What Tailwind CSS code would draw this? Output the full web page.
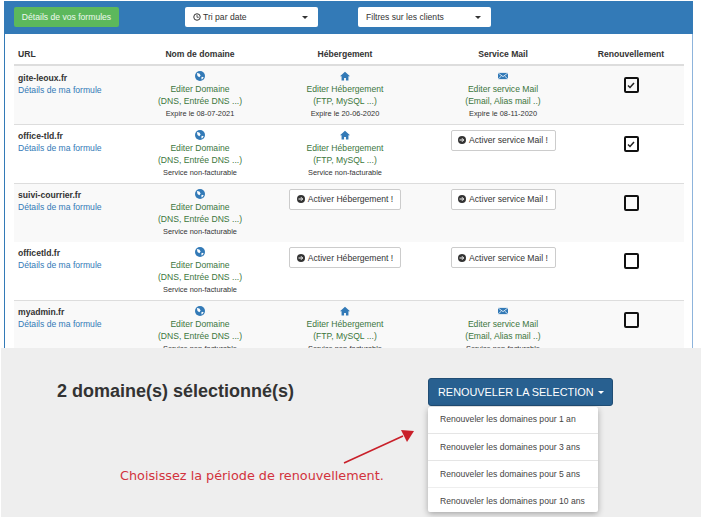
<!DOCTYPE html>
<html lang="fr">
<head>
    <meta charset="UTF-8">
    <title>Renouvellement</title>
    <script src="https://cdn.jsdelivr.net/npm/@tailwindcss/browser@4"></script>
</head>
<body class="bg-white w-[703px] h-[517px] overflow-hidden font-['Liberation_Sans',Arial,sans-serif] text-[#333]">
    <!-- Panel -->
    <div class="h-[348px] overflow-hidden pt-px pl-1 pr-[10px]">
        <div class="border-x border-[#8db4dc] border-l-[#337ab7] h-[400px]">
            <!-- Panel header -->
            <div class="bg-[#337ab7] h-[33px] pt-1.5 -mx-px flex text-[8.6px]">
                <button class="ml-2.5 w-[105px] h-5 bg-[#5cb85c] rounded-[2px] text-white/90">Détails de vos formules</button>
                <button class="ml-[66px] w-[133px] h-5 bg-white rounded-[2px] pl-2 pr-2.5 flex items-center text-[#333]">
                    <svg class="w-2 h-2 mr-px" viewBox="0 0 16 16"><circle cx="8" cy="8" r="6.5" fill="none" stroke="#333" stroke-width="2"/><path d="M8 4v4.500h3.500" fill="none" stroke="#333" stroke-width="1.600"/></svg>
                    <span class="ml-px">Tri par date</span>
                    <span class="ml-auto w-0 h-0 border-x-[3px] border-x-transparent border-t-[3px] border-t-[#333]"></span>
                </button>
                <button class="ml-10 w-[133px] h-5 bg-white rounded-[2px] pl-2 pr-2.5 flex items-center text-[#333]">
                    <span>Filtres sur les clients</span>
                    <span class="ml-auto w-0 h-0 border-x-[3px] border-x-transparent border-t-[3px] border-t-[#333]"></span>
                </button>
            </div>

            <!-- Domains table -->
            <table class="ml-[9px] w-[670px] table-fixed border-collapse text-[8.6px] leading-3 text-center">
                <colgroup>
                    <col class="w-[113px]"><col class="w-[146px]"><col class="w-[144px]"><col class="w-[172px]"><col class="w-[95px]">
                </colgroup>
                <thead>
                    <tr class="h-[31px] font-bold text-[8.6px] text-[#333]">
                        <th class="text-left pl-1 pt-[9px]">URL</th>
                        <th class="pt-[9px]">Nom de domaine</th>
                        <th class="pt-[9px]">Hébergement</th>
                        <th class="pt-[9px]">Service Mail</th>
                        <th class="pr-[11px] pt-[9px]">Renouvellement</th>
                    </tr>
                </thead>
                <tbody id="rows">
                    <tr class="h-[59px] bg-[#f9f9f9] border-t-2 border-[#ddd] align-top">
                        <td class="text-left pl-1 pt-[6px]"><b class="block text-[#333]">gite-leoux.fr</b><a class="text-[#337ab7]">Détails de ma formule</a></td>
                        <td class="pt-[5px] text-[#3c763d]">
                            <svg class="w-2.5 h-2.5 mx-auto mb-0.5" viewBox="0 0 16 16"><circle cx="8" cy="8" r="8" fill="#337ab7"/><path d="M3 3l4 1 2 3-2 3-3-2zM11 9l3 1-3 4-1-3z" fill="#fff"/></svg>
                            Editer Domaine<br>(DNS, Entrée DNS ...)<span class="block pt-px text-[7.4px] text-[#333]">Expire le 08-07-2021</span>
                        </td>
                        <td class="pt-[5px] text-[#3c763d]">
                            <svg class="w-2.5 h-2.5 mx-auto mb-0.5" viewBox="0 0 16 16"><path d="M8 1L0 8.500h2.500V15h4v-4h3v4h4V8.500H16z" fill="#337ab7"/></svg>
                            Editer Hébergement<br>(FTP, MySQL ...)<span class="block pt-px text-[7.4px] text-[#333]">Expire le 20-06-2020</span>
                        </td>
                        <td class="pt-[5px] text-[#3c763d]">
                            <svg class="w-2.5 h-2.5 mx-auto mb-0.5" viewBox="0 0 16 16"><path d="M0 3h16v10H0z" fill="#337ab7"/><path d="M0 3l8 6 8-6M0 13l5.500-5M16 13l-5.500-5" fill="none" stroke="#fff" stroke-width="1.200"/></svg>
                            Editer service Mail<br>(Email, Alias mail ..)<span class="block pt-px text-[7.4px] text-[#333]">Expire le 08-11-2020</span>
                        </td>
                        <td class="pr-[11px] pt-[11px]">
                            <span class="flex w-[15px] h-4 mx-auto border-2 border-[#111] rounded-[2px] items-center justify-center"><svg class="w-2 h-2" viewBox="0 0 16 16"><path d="M2 9l4 4 8-9" fill="none" stroke="#222" stroke-width="3"/></svg></span>
                        </td>
                    </tr>
                    <tr class="h-[59px] bg-white border-t border-[#ddd] align-top">
                        <td class="text-left pl-1 pt-[5px]"><b class="block text-[#333]">office-tld.fr</b><a class="text-[#337ab7]">Détails de ma formule</a></td>
                        <td class="pt-[5px] text-[#3c763d]">
                            <svg class="w-2.5 h-2.5 mx-auto mb-0.5" viewBox="0 0 16 16"><circle cx="8" cy="8" r="8" fill="#337ab7"/><path d="M3 3l4 1 2 3-2 3-3-2zM11 9l3 1-3 4-1-3z" fill="#fff"/></svg>
                            Editer Domaine<br>(DNS, Entrée DNS ...)<span class="block pt-px text-[7.4px] text-[#333]">Service non-facturable</span>
                        </td>
                        <td class="pt-[5px] text-[#3c763d]">
                            <svg class="w-2.5 h-2.5 mx-auto mb-0.5" viewBox="0 0 16 16"><path d="M8 1L0 8.500h2.500V15h4v-4h3v4h4V8.500H16z" fill="#337ab7"/></svg>
                            Editer Hébergement<br>(FTP, MySQL ...)<span class="block pt-px text-[7.4px] text-[#333]">Service non-facturable</span>
                        </td>
                        <td class="pt-[5px]">
                            <button class="inline-flex items-center justify-center whitespace-nowrap w-[105px] h-[21px] bg-white border border-[#ccc] rounded-[2px] text-[#333]"><svg class="w-2 h-2 mr-[3px]" viewBox="0 0 16 16"><circle cx="8" cy="8" r="8" fill="#333"/><path d="M3 8h7M8 4.500L11.500 8 8 11.500" fill="none" stroke="#fff" stroke-width="2"/></svg>Activer service Mail !</button>
                        </td>
                        <td class="pr-[11px] pt-[11px]">
                            <span class="flex w-[15px] h-4 mx-auto border-2 border-[#111] rounded-[2px] items-center justify-center"><svg class="w-2 h-2" viewBox="0 0 16 16"><path d="M2 9l4 4 8-9" fill="none" stroke="#222" stroke-width="3"/></svg></span>
                        </td>
                    </tr>
                    <tr class="h-[59px] bg-[#f9f9f9] border-t border-[#ddd] align-top">
                        <td class="text-left pl-1 pt-[5px]"><b class="block text-[#333]">suivi-courrier.fr</b><a class="text-[#337ab7]">Détails de ma formule</a></td>
                        <td class="pt-[5px] text-[#3c763d]">
                            <svg class="w-2.5 h-2.5 mx-auto mb-0.5" viewBox="0 0 16 16"><circle cx="8" cy="8" r="8" fill="#337ab7"/><path d="M3 3l4 1 2 3-2 3-3-2zM11 9l3 1-3 4-1-3z" fill="#fff"/></svg>
                            Editer Domaine<br>(DNS, Entrée DNS ...)<span class="block pt-px text-[7.4px] text-[#333]">Service non-facturable</span>
                        </td>
                        <td class="pt-[5px]">
                            <button class="inline-flex items-center justify-center whitespace-nowrap w-[112px] h-[21px] bg-white border border-[#ccc] rounded-[2px] text-[#333]"><svg class="w-2 h-2 mr-[3px]" viewBox="0 0 16 16"><circle cx="8" cy="8" r="8" fill="#333"/><path d="M3 8h7M8 4.500L11.500 8 8 11.500" fill="none" stroke="#fff" stroke-width="2"/></svg>Activer Hébergement !</button>
                        </td>
                        <td class="pt-[5px]">
                            <button class="inline-flex items-center justify-center whitespace-nowrap w-[105px] h-[21px] bg-white border border-[#ccc] rounded-[2px] text-[#333]"><svg class="w-2 h-2 mr-[3px]" viewBox="0 0 16 16"><circle cx="8" cy="8" r="8" fill="#333"/><path d="M3 8h7M8 4.500L11.500 8 8 11.500" fill="none" stroke="#fff" stroke-width="2"/></svg>Activer service Mail !</button>
                        </td>
                        <td class="pr-[11px] pt-[11px]">
                            <span class="block w-[15px] h-4 mx-auto border-2 border-[#111] rounded-[2px]"></span>
                        </td>
                    </tr>
                    <tr class="h-[58px] bg-white align-top">
                        <td class="text-left pl-1 pt-[5px]"><b class="block text-[#333]">officetld.fr</b><a class="text-[#337ab7]">Détails de ma formule</a></td>
                        <td class="pt-[5px] text-[#3c763d]">
                            <svg class="w-2.5 h-2.5 mx-auto mb-0.5" viewBox="0 0 16 16"><circle cx="8" cy="8" r="8" fill="#337ab7"/><path d="M3 3l4 1 2 3-2 3-3-2zM11 9l3 1-3 4-1-3z" fill="#fff"/></svg>
                            Editer Domaine<br>(DNS, Entrée DNS ...)<span class="block pt-px text-[7.4px] text-[#333]">Service non-facturable</span>
                        </td>
                        <td class="pt-[5px]">
                            <button class="inline-flex items-center justify-center whitespace-nowrap w-[112px] h-[21px] bg-white border border-[#ccc] rounded-[2px] text-[#333]"><svg class="w-2 h-2 mr-[3px]" viewBox="0 0 16 16"><circle cx="8" cy="8" r="8" fill="#333"/><path d="M3 8h7M8 4.500L11.500 8 8 11.500" fill="none" stroke="#fff" stroke-width="2"/></svg>Activer Hébergement !</button>
                        </td>
                        <td class="pt-[5px]">
                            <button class="inline-flex items-center justify-center whitespace-nowrap w-[105px] h-[21px] bg-white border border-[#ccc] rounded-[2px] text-[#333]"><svg class="w-2 h-2 mr-[3px]" viewBox="0 0 16 16"><circle cx="8" cy="8" r="8" fill="#333"/><path d="M3 8h7M8 4.500L11.500 8 8 11.500" fill="none" stroke="#fff" stroke-width="2"/></svg>Activer service Mail !</button>
                        </td>
                        <td class="pr-[11px] pt-[11px]">
                            <span class="block w-[15px] h-4 mx-auto border-2 border-[#111] rounded-[2px]"></span>
                        </td>
                    </tr>
                    <tr class="h-[59px] bg-[#f9f9f9] border-t border-[#ddd] align-top">
                        <td class="text-left pl-1 pt-[5px]"><b class="block text-[#333]">myadmin.fr</b><a class="text-[#337ab7]">Détails de ma formule</a></td>
                        <td class="pt-[5px] text-[#3c763d]">
                            <svg class="w-2.5 h-2.5 mx-auto mb-0.5" viewBox="0 0 16 16"><circle cx="8" cy="8" r="8" fill="#337ab7"/><path d="M3 3l4 1 2 3-2 3-3-2zM11 9l3 1-3 4-1-3z" fill="#fff"/></svg>
                            Editer Domaine<br>(DNS, Entrée DNS ...)<span class="block pt-px text-[7.4px] text-[#333]">Service non-facturable</span>
                        </td>
                        <td class="pt-[5px] text-[#3c763d]">
                            <svg class="w-2.5 h-2.5 mx-auto mb-0.5" viewBox="0 0 16 16"><path d="M8 1L0 8.500h2.500V15h4v-4h3v4h4V8.500H16z" fill="#337ab7"/></svg>
                            Editer Hébergement<br>(FTP, MySQL ...)<span class="block pt-px text-[7.4px] text-[#333]">Service non-facturable</span>
                        </td>
                        <td class="pt-[5px] text-[#3c763d]">
                            <svg class="w-2.5 h-2.5 mx-auto mb-0.5" viewBox="0 0 16 16"><path d="M0 3h16v10H0z" fill="#337ab7"/><path d="M0 3l8 6 8-6M0 13l5.500-5M16 13l-5.500-5" fill="none" stroke="#fff" stroke-width="1.200"/></svg>
                            Editer service Mail<br>(Email, Alias mail ..)<span class="block pt-px text-[7.4px] text-[#333]">Service non-facturable</span>
                        </td>
                        <td class="pr-[11px] pt-[11px]">
                            <span class="block w-[15px] h-4 mx-auto border-2 border-[#111] rounded-[2px]"></span>
                        </td>
                    </tr>
                </tbody>
            </table>
        </div>
    </div>

    <!-- Selection bar -->
    <div class="relative ml-px mr-0.5 h-[169px] bg-[#eee] flex">
        <div class="w-[427px] pl-14 pt-[33px]">
            <h2 class="font-bold text-[18px] leading-5 text-[#333]">2 domaine(s) sélectionné(s)</h2>
            <p class="ml-[63px] mt-[67px] font-['DejaVu_Sans',sans-serif] text-[12.8px] leading-4 text-[#d2323c]">Choisissez la période de renouvellement.</p>
        </div>
        <div class="pt-[30px]">
            <button class="flex items-center whitespace-nowrap w-[185px] h-7 pl-[9px] bg-[#286090] border border-[#204d74] rounded-[3px] text-white text-[10.9px]">RENOUVELER LA SELECTION<span class="ml-1 w-0 h-0 border-x-[3px] border-x-transparent border-t-[3px] border-t-white"></span></button>
            <ul class="mt-px w-[170px] bg-white rounded-[2px] shadow-[0_2px_6px_rgba(0,0,0,0.3)] text-[8.6px] leading-3 text-[#444]">
                <li class="h-[27px] pl-[12px] pt-[6px] border-b border-[#e5e5e5]">Renouveler les domaines pour 1 an</li>
                <li class="h-[27px] pl-[12px] pt-[7px] border-b border-[#e5e5e5]">Renouveler les domaines pour 3 ans</li>
                <li class="h-[27px] pl-[12px] pt-[7px] border-b border-[#eee]">Renouveler les domaines pour 5 ans</li>
                <li class="h-[24px] pl-[12px] pt-[7px]">Renouveler les domaines pour 10 ans</li>
            </ul>
        </div>
        <!-- Arrow towards the menu -->
        <svg class="absolute left-[340px] top-[78px] w-[76px] h-[40px]" viewBox="0 0 76 40"><path d="M3 37L62 10" stroke="#c9202a" stroke-width="1.600"/><path d="M73 5L60 4l6 12z" fill="#c9202a"/></svg>
    </div>
</body>
</html>
